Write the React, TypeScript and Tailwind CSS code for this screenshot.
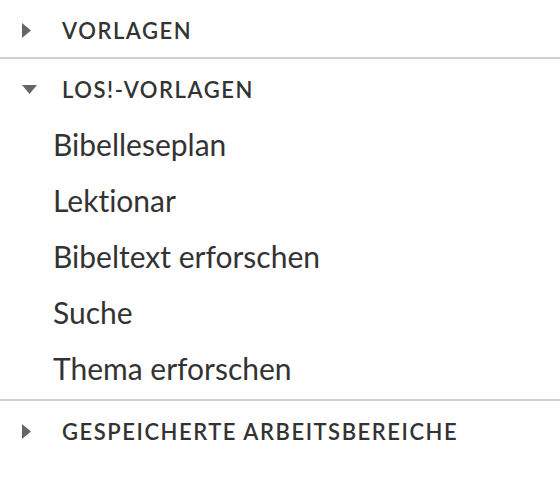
const ITEMS = ["Bibelleseplan", "Lektionar", "Bibeltext erforschen", "Suche", "Thema erforschen"];

function Caret({ open }: { open: boolean }) {
  return open ? (
    <svg className="w-[15px] h-[9px] text-[#666]" viewBox="0 0 15 9" fill="currentColor">
      <path d="M0 0h15L7.5 9z" />
    </svg>
  ) : (
    <svg className="w-[9px] h-[15px] text-[#666]" viewBox="0 0 9 15" fill="currentColor">
      <path d="M0 0l9 7.5L0 15z" />
    </svg>
  );
}

function Header({ label, open }: { label: string; open: boolean }) {
  return (
    <div className="flex h-[57px] items-center pt-[4px]">
      <div className="flex w-[62px] shrink-0 items-center pl-[22px]">
        <Caret open={open} />
      </div>
      <span className="text-[22px] font-semibold uppercase tracking-[0.07em] text-[#333] leading-none">
        {label}
      </span>
    </div>
  );
}

export default function App() {
  return (
    <div
      className="h-[482px] w-[560px] bg-white [font-variant-ligatures:none]"
      style={{ fontFamily: "Lato, 'Liberation Sans', sans-serif" }}
    >
      <div className="border-b-2 border-[#d0d0d0]">
        <Header label="Vorlagen" open={false} />
      </div>
      <div className="border-b-2 border-[#d0d0d0]">
        <Header label="LOS!-Vorlagen" open={true} />
        <ul className="pb-[3px]">
          {ITEMS.map((item) => (
            <li key={item} className="flex h-[56px] items-center pl-[53px] text-[30px] text-[#333] leading-none">
              {item}
            </li>
          ))}
        </ul>
      </div>
      <Header label="Gespeicherte Arbeitsbereiche" open={false} />
    </div>
  );
}
